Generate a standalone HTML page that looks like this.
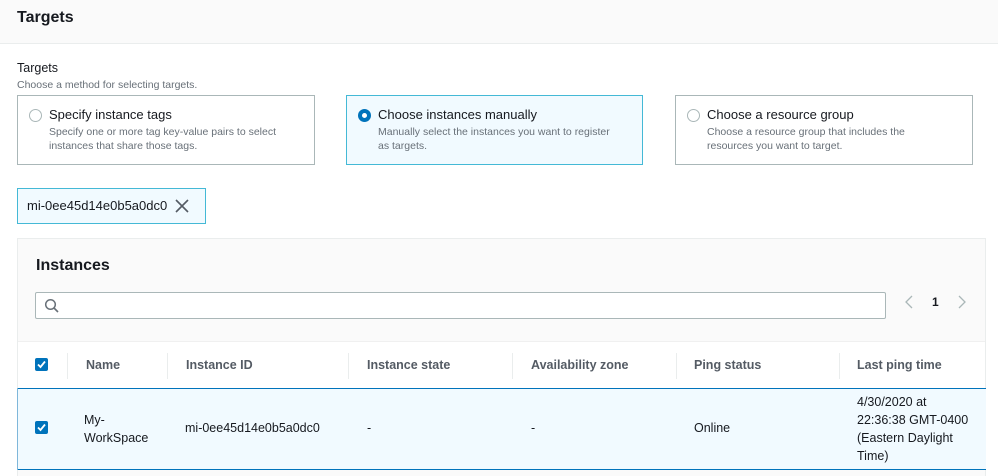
<!DOCTYPE html>
<html><head><meta charset="utf-8"><style>
*{box-sizing:border-box;margin:0;padding:0}
body{width:998px;height:476px;overflow:hidden;background:#fff;font-family:"Liberation Sans",sans-serif;color:#16191f;position:relative}
.a{position:absolute}
.hdr{left:0;top:0;width:998px;height:44px;background:#fafafa;border-bottom:1px solid #eaeded}
.card{height:70px;top:95px;border:1px solid #aab7b8;background:#fff}
.card.sel{border-color:#44b9d6;background:#f1faff}
.radio{left:11px;top:13px;width:13px;height:13px;border-radius:50%;border:1px solid #aab7b8;background:#fff}
.card.sel .radio{border:4px solid #0073bb}
.ct{left:31px;top:11px;font-size:13px;color:#16191f}
.cd{left:31px;top:29px;font-size:10.5px;color:#687078;line-height:14px}
.cb{width:13px;height:13px;background:#0073bb;border-radius:2px}
.th{top:358px;font-size:12.5px;font-weight:bold;color:#545b64}
.dv{top:353px;width:1px;height:26px;background:#eaeded}
.td{font-size:12.5px;color:#16191f}
</style></head><body>
<div class="a hdr"></div>
<div class="a" style="left:17px;top:9px;font-size:16px;font-weight:bold">Targets</div>
<div class="a" style="left:17px;top:61px;font-size:12.5px;color:#16191f">Targets</div>
<div class="a" style="left:17px;top:79px;font-size:10.5px;color:#687078">Choose a method for selecting targets.</div>

<div class="a card" style="left:17px;width:298px"><div class="a radio"></div><div class="a ct">Specify instance tags</div><div class="a cd">Specify one or more tag key-value pairs to select<br>instances that share those tags.</div></div>
<div class="a card sel" style="left:346px;width:297px"><div class="a radio"></div><div class="a ct">Choose instances manually</div><div class="a cd">Manually select the instances you want to register<br>as targets.</div></div>
<div class="a card" style="left:675px;width:298px"><div class="a radio"></div><div class="a ct">Choose a resource group</div><div class="a cd">Choose a resource group that includes the<br>resources you want to target.</div></div>

<div class="a" style="left:17px;top:188px;width:189px;height:36px;border:1px solid #44b9d6;background:#f1faff"></div>
<div class="a" style="left:27px;top:198px;font-size:13px">mi-0ee45d14e0b5a0dc0</div>
<svg class="a" style="left:175px;top:199px" width="14" height="14" viewBox="0 0 14 14"><path d="M1 1L13 13M13 1L1 13" stroke="#545b64" stroke-width="1.6"/></svg>

<div class="a" style="left:17px;top:238px;width:969px;height:238px;background:#fafafa;border:1px solid #eaeded;border-bottom:none"></div>
<div class="a" style="left:36px;top:257px;font-size:16px;font-weight:bold">Instances</div>
<div class="a" style="left:35px;top:292px;width:851px;height:27px;background:#fff;border:1px solid #aab7b8;border-radius:2px"></div>
<svg class="a" style="left:44px;top:298px" width="16" height="16" viewBox="0 0 16 16"><circle cx="6.5" cy="6.5" r="4.8" fill="none" stroke="#687078" stroke-width="1.5"/><path d="M10 10L14 14" stroke="#687078" stroke-width="1.6"/></svg>
<svg class="a" style="left:903px;top:294px" width="12" height="16" viewBox="0 0 12 16"><path d="M9 2L3 8L9 14" fill="none" stroke="#aab7b8" stroke-width="1.3"/></svg>
<div class="a" style="left:932px;top:295px;font-size:12px;font-weight:bold">1</div>
<svg class="a" style="left:956px;top:294px" width="12" height="16" viewBox="0 0 12 16"><path d="M3 2L9 8L3 14" fill="none" stroke="#aab7b8" stroke-width="1.3"/></svg>
<div class="a" style="left:18px;top:341px;width:967px;height:1px;background:#f0f0f0"></div>
<div class="a" style="left:18px;top:342px;width:967px;height:46px;background:#fff"></div>

<div class="a cb" style="left:35px;top:358px"></div>
<svg class="a" style="left:35px;top:358px" width="13" height="13" viewBox="0 0 13 13"><path d="M3 6.5L5.5 9L10 3.5" fill="none" stroke="#fff" stroke-width="1.8"/></svg>
<div class="a dv" style="left:67px"></div><div class="a dv" style="left:167px"></div><div class="a dv" style="left:348px"></div><div class="a dv" style="left:512px"></div><div class="a dv" style="left:676px"></div><div class="a dv" style="left:839px"></div>
<div class="a th" style="left:86px">Name</div>
<div class="a th" style="left:186px">Instance ID</div>
<div class="a th" style="left:367px">Instance state</div>
<div class="a th" style="left:531px">Availability zone</div>
<div class="a th" style="left:694px">Ping status</div>
<div class="a th" style="left:857px">Last ping time</div>

<div class="a" style="left:17px;top:388px;width:969px;height:82px;background:#f1faff;border:1px solid #0073bb;border-right:none;border-left-color:#0073bb"></div>
<div class="a" style="left:17px;top:388px;width:1px;height:82px;background:#7fb7da"></div>
<div class="a cb" style="left:35px;top:421px"></div>
<svg class="a" style="left:35px;top:421px" width="13" height="13" viewBox="0 0 13 13"><path d="M3 6.5L5.5 9L10 3.5" fill="none" stroke="#fff" stroke-width="1.8"/></svg>
<div class="a td" style="left:84px;top:411px;line-height:18px">My-<br>WorkSpace</div>
<div class="a td" style="left:185px;top:421px">mi-0ee45d14e0b5a0dc0</div>
<div class="a td" style="left:367px;top:421px">-</div>
<div class="a td" style="left:531px;top:421px">-</div>
<div class="a td" style="left:694px;top:421px">Online</div>
<div class="a td" style="left:857px;top:393px;line-height:18px">4/30/2020 at<br>22:36:38 GMT-0400<br>(Eastern Daylight<br>Time)</div>
</body></html>
